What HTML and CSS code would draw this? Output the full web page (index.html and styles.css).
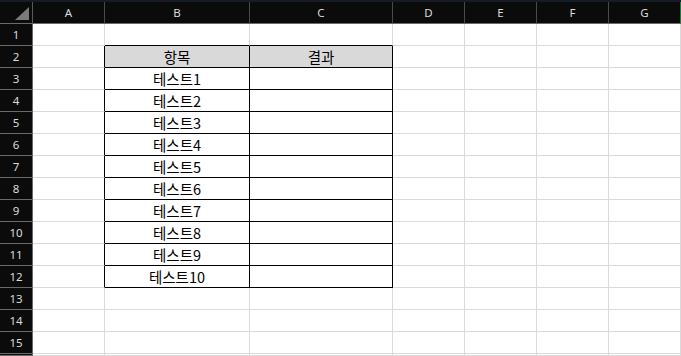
FILE: index.html
```html
<!DOCTYPE html>
<html lang="ko">
<head>
<meta charset="utf-8">
<link rel="stylesheet" href="styles.css">
</head>
<body>
<div class="topbar"></div>
<div class="sheet">
  <div class="corner"><svg width="32" height="21" viewBox="0 0 32 21"><polygon points="29,5 29,18 15,18" fill="#7a7a7a"/></svg></div>
  <div class="ch">A</div><div class="ch">B</div><div class="ch">C</div><div class="ch">D</div><div class="ch">E</div><div class="ch">F</div><div class="ch last">G</div>

  <div class="rh">1</div><div class="c"></div><div class="c bB"></div><div class="c bB"></div><div class="c"></div><div class="c"></div><div class="c"></div><div class="c"></div>
  <div class="rh">2</div><div class="c bR"></div><div class="c bR bB hd">항목</div><div class="c bR bB hd">결과</div><div class="c"></div><div class="c"></div><div class="c"></div><div class="c"></div>
  <div class="rh">3</div><div class="c bR"></div><div class="c bR bB">테스트1</div><div class="c bR bB"></div><div class="c"></div><div class="c"></div><div class="c"></div><div class="c"></div>
  <div class="rh">4</div><div class="c bR"></div><div class="c bR bB">테스트2</div><div class="c bR bB"></div><div class="c"></div><div class="c"></div><div class="c"></div><div class="c"></div>
  <div class="rh">5</div><div class="c bR"></div><div class="c bR bB">테스트3</div><div class="c bR bB"></div><div class="c"></div><div class="c"></div><div class="c"></div><div class="c"></div>
  <div class="rh">6</div><div class="c bR"></div><div class="c bR bB">테스트4</div><div class="c bR bB"></div><div class="c"></div><div class="c"></div><div class="c"></div><div class="c"></div>
  <div class="rh">7</div><div class="c bR"></div><div class="c bR bB">테스트5</div><div class="c bR bB"></div><div class="c"></div><div class="c"></div><div class="c"></div><div class="c"></div>
  <div class="rh">8</div><div class="c bR"></div><div class="c bR bB">테스트6</div><div class="c bR bB"></div><div class="c"></div><div class="c"></div><div class="c"></div><div class="c"></div>
  <div class="rh">9</div><div class="c bR"></div><div class="c bR bB">테스트7</div><div class="c bR bB"></div><div class="c"></div><div class="c"></div><div class="c"></div><div class="c"></div>
  <div class="rh">10</div><div class="c bR"></div><div class="c bR bB">테스트8</div><div class="c bR bB"></div><div class="c"></div><div class="c"></div><div class="c"></div><div class="c"></div>
  <div class="rh">11</div><div class="c bR"></div><div class="c bR bB">테스트9</div><div class="c bR bB"></div><div class="c"></div><div class="c"></div><div class="c"></div><div class="c"></div>
  <div class="rh">12</div><div class="c bR"></div><div class="c bR bB">테스트10</div><div class="c bR bB"></div><div class="c"></div><div class="c"></div><div class="c"></div><div class="c"></div>
  <div class="rh">13</div><div class="c"></div><div class="c"></div><div class="c"></div><div class="c"></div><div class="c"></div><div class="c"></div><div class="c"></div>
  <div class="rh">14</div><div class="c"></div><div class="c"></div><div class="c"></div><div class="c"></div><div class="c"></div><div class="c"></div><div class="c"></div>
  <div class="rh">15</div><div class="c"></div><div class="c"></div><div class="c"></div><div class="c"></div><div class="c"></div><div class="c"></div><div class="c"></div>
  <div class="rh"></div><div class="c"></div><div class="c"></div><div class="c"></div><div class="c"></div><div class="c"></div><div class="c"></div><div class="c"></div>
</div>
</body>
</html>
```

FILE: styles.css
```css
html, body {
  margin: 0;
  padding: 0;
  background: #ffffff;
  overflow: hidden;
  width: 681px;
  height: 356px;
}

.topbar {
  height: 2px;
  background: #161c27;
}

.sheet {
  display: grid;
  grid-template-columns: 33px 72px 145px 143px 72px 72px 72px 72px;
  grid-template-rows: 22px repeat(15, 22px) 2px;
  font-family: "Noto Sans CJK KR", "Noto Sans", sans-serif;
}

.corner {
  background: #0b0b0b;
  border-right: 1px solid #5a5a5a;
  border-bottom: 1px solid #6a6a6a;
  box-sizing: border-box;
}

.corner svg {
  display: block;
}

.ch {
  background: #0b0b0b;
  color: #dcdcdc;
  font-family: "Noto Sans", "Open Sans", sans-serif;
  font-size: 11.5px;
  line-height: 21px;
  text-align: center;
  border-right: 1px solid #4a4a4a;
  border-bottom: 1px solid #6a6a6a;
  box-sizing: border-box;
}

.ch.last {
  border-right: 1px solid #1f7a3a;
}

.rh {
  background: #0b0b0b;
  color: #dcdcdc;
  font-family: "Noto Sans", "Open Sans", sans-serif;
  font-size: 11.5px;
  line-height: 21px;
  text-align: center;
  border-right: 1px solid #6a6a6a;
  border-bottom: 1px solid #6a6a6a;
  box-sizing: border-box;
  overflow: hidden;
}

.c {
  border-right: 1px solid #dadada;
  border-bottom: 1px solid #dadada;
  box-sizing: border-box;
  font-size: 14.5px;
  line-height: 21px;
  color: #000;
  text-align: center;
  white-space: nowrap;
  overflow: hidden;
}

.c.bR {
  border-right-color: #000;
}

.c.bB {
  border-bottom-color: #000;
}

.c.hd {
  background: #d9d9d9;
}
```
